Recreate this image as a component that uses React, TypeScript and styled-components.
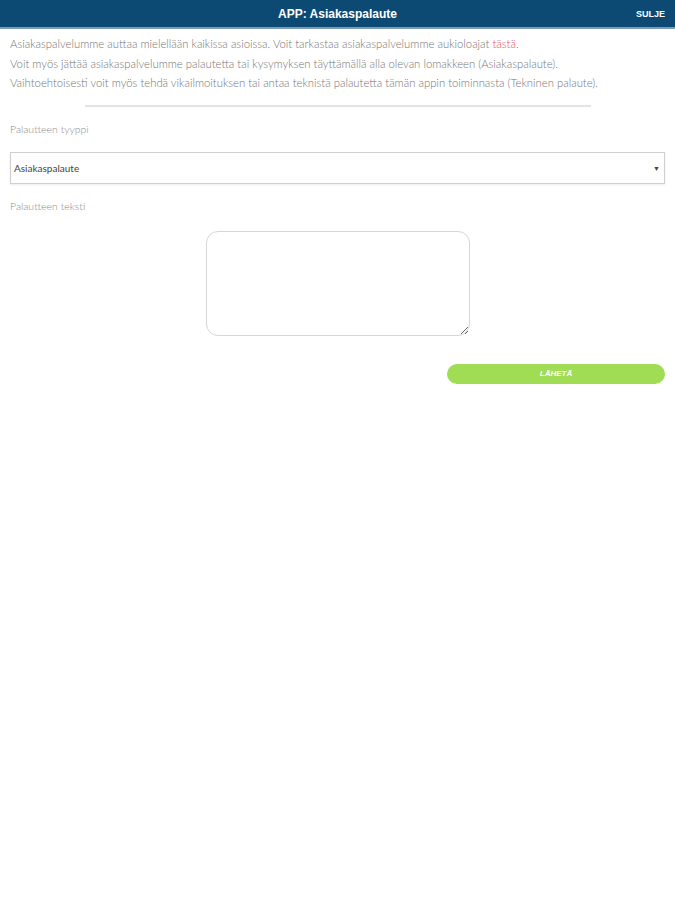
import { FC } from 'react';
import styled, { createGlobalStyle } from 'styled-components';

const GlobalStyle = createGlobalStyle`
  body {
    margin: 0;
    background: #fff;
    font-family: Lato, 'Open Sans', sans-serif;
  }
`;

const Header = styled.header`
  position: relative;
  height: 27px;
  background: #0c4a74;
  border-bottom: 2px solid #7d9bb2;
  display: flex;
  align-items: center;
  justify-content: center;
`;

const Title = styled.h1`
  margin: 0;
  font-size: 12px;
  font-weight: 700;
  color: #fff;
  font-family: 'Liberation Sans', Arial, sans-serif;
`;

const CloseButton = styled.button`
  position: absolute;
  right: 10px;
  top: 9px;
  border: none;
  background: none;
  padding: 0;
  color: #fff;
  font-size: 9px;
  font-weight: 700;
  font-family: 'Liberation Sans', Arial, sans-serif;
`;

const Content = styled.main`
  padding: 5px 10px 0;
  display: flex;
  flex-direction: column;
`;

const Info = styled.p`
  margin: 0;
  line-height: 19.5px;
  font-size: 11.3px;
  font-weight: 300;
  color: #757575;
  white-space: nowrap;
`;

const RedLink = styled.a`
  color: #e94b4b;
`;

const Divider = styled.hr`
  width: 506px;
  margin: 12px auto 0;
  border: none;
  border-top: 2px solid #e3e3e3;
`;

const Label = styled.label<{ $top: number }>`
  margin-top: ${(p) => p.$top}px;
  font-size: 10.5px;
  font-weight: 300;
  color: #8a8a8a;
`;

const SelectBox = styled.div`
  margin-top: 17px;
  height: 32px;
  box-sizing: border-box;
  border: 1px solid #cfcfcf;
  box-shadow: 0 1px 2px rgba(0, 0, 0, 0.08);
  display: flex;
  align-items: center;
  justify-content: space-between;
  padding: 0 4px 0 3px;
  font-size: 10px;
  color: #444;
`;

const Caret = styled.span`
  font-size: 7px;
  color: #444;
`;

const TextArea = styled.textarea`
  align-self: center;
  width: 264px;
  height: 105px;
  margin-top: 19px;
  box-sizing: border-box;
  border: 1px solid #d6d6d6;
  border-radius: 12px;
  resize: both;
  outline: none;
`;

const SendButton = styled.button`
  align-self: flex-end;
  width: 218px;
  height: 20px;
  margin-top: 28px;
  border: none;
  border-radius: 10px;
  background: #a1dc55;
  color: #fff;
  font-size: 8px;
  font-weight: 700;
  font-style: italic;
  font-family: 'Liberation Sans', Arial, sans-serif;
`;

const App: FC = () => (
  <>
    <GlobalStyle />
    <Header>
      <Title>APP: Asiakaspalaute</Title>
      <CloseButton>SULJE</CloseButton>
    </Header>
    <Content>
      <Info>
        Asiakaspalvelumme auttaa mielellään kaikissa asioissa. Voit tarkastaa asiakaspalvelumme aukioloajat{' '}
        <RedLink>tästä</RedLink>.
      </Info>
      <Info>
        Voit myös jättää asiakaspalvelumme palautetta tai kysymyksen täyttämällä alla olevan lomakkeen (Asiakaspalaute).
      </Info>
      <Info>
        Vaihtoehtoisesti voit myös tehdä vikailmoituksen tai antaa teknistä palautetta tämän appin toiminnasta (Tekninen palaute).
      </Info>
      <Divider />
      <Label $top={16}>Palautteen tyyppi</Label>
      <SelectBox>
        <span>Asiakaspalaute</span>
        <Caret>▼</Caret>
      </SelectBox>
      <Label $top={16}>Palautteen teksti</Label>
      <TextArea />
      <SendButton>LÄHETÄ</SendButton>
    </Content>
  </>
);

export default App;
